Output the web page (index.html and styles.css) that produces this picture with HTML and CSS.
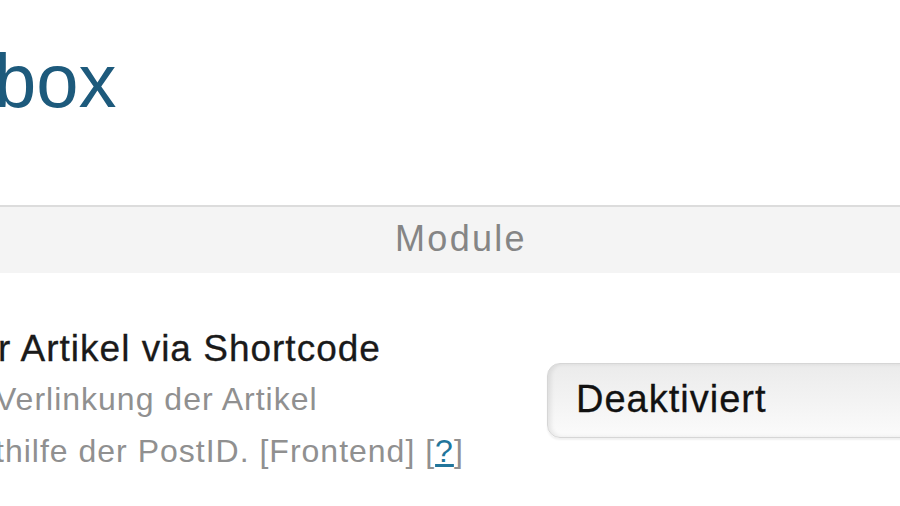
FILE: index.html
```html
<!DOCTYPE html>
<html lang="de">
<head>
    <meta charset="UTF-8">
    <meta name="viewport" content="width=device-width, initial-scale=1.0">
    <title>Einstellungen</title>
    <link rel="stylesheet" href="styles.css">
</head>
<body>
    <div class="wrap">
        <h2 class="page-title">box</h2>

        <div class="section-head">Module</div>

        <div class="option-row">
            <div class="option-label">
                <h3>r Artikel via Shortcode</h3>
                <p class="description">Verlinkung der Artikel<br>thilfe der PostID. [Frontend] [<a href="#">?</a>]</p>
            </div>
            <div class="option-field">
                <div class="select-box">Deaktiviert</div>
            </div>
        </div>
    </div>
</body>
</html>
```

FILE: styles.css
```css
html, body {
    margin: 0;
    padding: 0;
    background-color: #fff;
    overflow: hidden;
}
body {
    font-family: "Liberation Sans", Arial, sans-serif;
    width: 900px;
    height: 506px;
}
.wrap {
    padding-top: 43px;
}
.page-title {
    margin: 0 0 0 -6px;
    font-size: 76px;
    font-weight: normal;
    line-height: 76px;
    color: #1d5a7c;
}
.section-head {
    margin: 86px -40px 0 -40px;
    padding-left: 22px;
    border-top: 2px solid #dcdcdc;
    background-color: #f4f4f4;
    height: 66px;
    line-height: 64px;
    text-align: center;
    font-size: 36px;
    letter-spacing: 2.3px;
    color: #858585;
}
.option-row {
    display: flex;
    align-items: flex-start;
    margin-top: 54px;
}
.option-label {
    width: 549px;
    flex-shrink: 0;
    margin-left: -2px;
}
.option-label h3 {
    margin: 0;
    font-size: 37px;
    font-weight: normal;
    line-height: 44px;
    letter-spacing: 1px;
    color: #1a1a1a;
    -webkit-text-stroke: 0.3px #1a1a1a;
}
.description {
    margin: 2px 0 0 -3px;
    font-size: 32px;
    line-height: 52px;
    letter-spacing: 1px;
    color: #909090;
}
.description a {
    color: #21759b;
}
.option-field {
    flex: 1;
    margin-right: -60px;
    padding-top: 36px;
}
.select-box {
    height: 63px;
    padding: 4px 0 6px 28px;
    line-height: 63px;
    font-size: 38px;
    letter-spacing: 1px;
    color: #111;
    -webkit-text-stroke: 0.3px #111;
    border: 1px solid #d6d6d6;
    border-radius: 13px;
    background: linear-gradient(to bottom, #ebebeb, #fbfbfb);
    box-shadow: inset 3px 0 4px rgba(0, 0, 0, 0.08), 0 2px 2px rgba(0, 0, 0, 0.06);
}
```
